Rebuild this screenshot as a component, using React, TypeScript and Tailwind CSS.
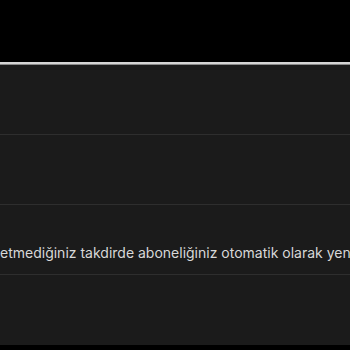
import React from "react";

const rows = ["", "", "etmediğiniz takdirde aboneliğiniz otomatik olarak yenilenir.", ""];

export default function App() {
  return (
    <div
      className="w-[350px] h-[350px] bg-black overflow-hidden flex flex-col"
      style={{ fontFamily: "Inter, 'Noto Sans', sans-serif" }}
    >
      {/* top empty area */}
      <div className="h-[62px] shrink-0" />
      <div className="h-[2px] bg-[#d6d6d6] shrink-0" />
      <div className="h-[1px] bg-[#8a8a8a] shrink-0" />

      {/* list panel */}
      <div className="bg-[#1b1b1b] flex flex-col shrink-0">
        {rows.map((text, i) => (
          <div
            key={i}
            className={`h-[70px] overflow-hidden ${
              i < rows.length - 1 ? "border-b border-[#2e2e2e]" : ""
            }`}
          >
            {text && (
              <p className="pt-[38px] text-[14px] leading-[20px] text-[#d8d8d8] whitespace-nowrap">
                {text}
              </p>
            )}
          </div>
        ))}
      </div>
    </div>
  );
}
